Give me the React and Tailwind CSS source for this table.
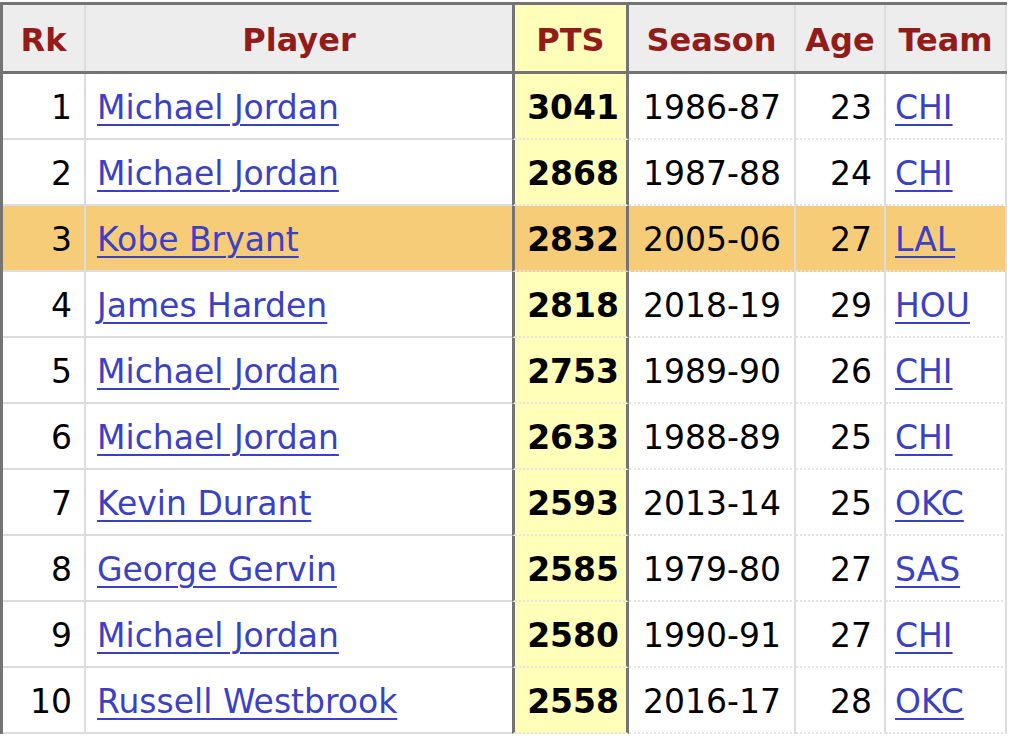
const rows = [
  { rk: 1, player: 'Michael Jordan', pts: 3041, season: '1986-87', age: 23, team: 'CHI' },
  { rk: 2, player: 'Michael Jordan', pts: 2868, season: '1987-88', age: 24, team: 'CHI' },
  { rk: 3, player: 'Kobe Bryant', pts: 2832, season: '2005-06', age: 27, team: 'LAL', hl: true },
  { rk: 4, player: 'James Harden', pts: 2818, season: '2018-19', age: 29, team: 'HOU' },
  { rk: 5, player: 'Michael Jordan', pts: 2753, season: '1989-90', age: 26, team: 'CHI' },
  { rk: 6, player: 'Michael Jordan', pts: 2633, season: '1988-89', age: 25, team: 'CHI' },
  { rk: 7, player: 'Kevin Durant', pts: 2593, season: '2013-14', age: 25, team: 'OKC' },
  { rk: 8, player: 'George Gervin', pts: 2585, season: '1979-80', age: 27, team: 'SAS' },
  { rk: 9, player: 'Michael Jordan', pts: 2580, season: '1990-91', age: 27, team: 'CHI' },
  { rk: 10, player: 'Russell Westbrook', pts: 2558, season: '2016-17', age: 28, team: 'OKC' },
]

const cols = 'grid grid-cols-[83px_426px_117px_167px_90px_121px]'
const link = 'text-[#3b41c5] underline decoration-2 underline-offset-[5px]'

export default function App() {
  return (
    <div className="w-[1010px] h-[736px] bg-white overflow-hidden pt-[2px] font-['DejaVu_Sans',Verdana,sans-serif]">
      <div className="w-[1007px] border-l-[3px] border-t-[3px] border-[#747474]">
        {/* Header */}
        <div className={`${cols} h-[69px] border-b-[3px] border-[#747474] bg-[#ededed] text-[32px] font-bold text-[#921c1a]`}>
          <div className="flex items-center justify-center pt-[4px] border-r-2 border-[#dcdcdc]">Rk</div>
          <div className="flex items-center justify-center pt-[4px]">Player</div>
          <div className="flex items-center justify-center pt-[4px] bg-[#ffffb9] border-x-[3px] border-[#747474]">PTS</div>
          <div className="flex items-center justify-center pt-[4px] border-r-2 border-[#dcdcdc]">Season</div>
          <div className="flex items-center justify-center pt-[4px] border-r-2 border-[#dcdcdc]">Age</div>
          <div className="flex items-center justify-center pt-[4px] border-r-2 border-[#dcdcdc]">Team</div>
        </div>

        {/* Rows */}
        {rows.map((r) => (
          <div key={r.rk} className={`${cols} h-[66px] text-[33px] text-black ${r.hl ? 'bg-[#f7cc79]' : ''}`}>
            <div className="flex items-center justify-end pt-[3px] pr-[12px] border-r-2 border-b-2 border-r-[#dcdcdc] border-b-[#dcdcdc]">{r.rk}</div>
            <div className="flex items-center pt-[3px] pl-[11px] border-b-2 border-[#dcdcdc]">
              <a className={link}>{r.player}</a>
            </div>
            <div className={`flex items-center justify-end pt-[3px] pr-[7px] font-bold border-x-[3px] border-x-[#747474] border-b-2 border-b-[#e2e2e2] border-dotted ${r.hl ? '' : 'bg-[#ffffb9]'}`} style={{ borderLeftStyle: 'solid', borderRightStyle: 'solid' }}>{r.pts}</div>
            <div className="flex items-center pt-[3px] pl-[14px] border-r-2 border-r-[#dcdcdc] border-b-2 border-b-[#e2e2e2] border-dotted" style={{ borderRightStyle: 'solid' }}>{r.season}</div>
            <div className="flex items-center justify-end pt-[3px] pr-[12px] border-r-2 border-r-[#dcdcdc] border-b-2 border-b-[#e2e2e2] border-dotted" style={{ borderRightStyle: 'solid' }}>{r.age}</div>
            <div className="flex items-center pt-[3px] pl-[9px] border-r-2 border-r-[#dcdcdc] border-b-2 border-b-[#e2e2e2] border-dotted" style={{ borderRightStyle: 'solid' }}>
              <a className={link}>{r.team}</a>
            </div>
          </div>
        ))}
      </div>
    </div>
  )
}
